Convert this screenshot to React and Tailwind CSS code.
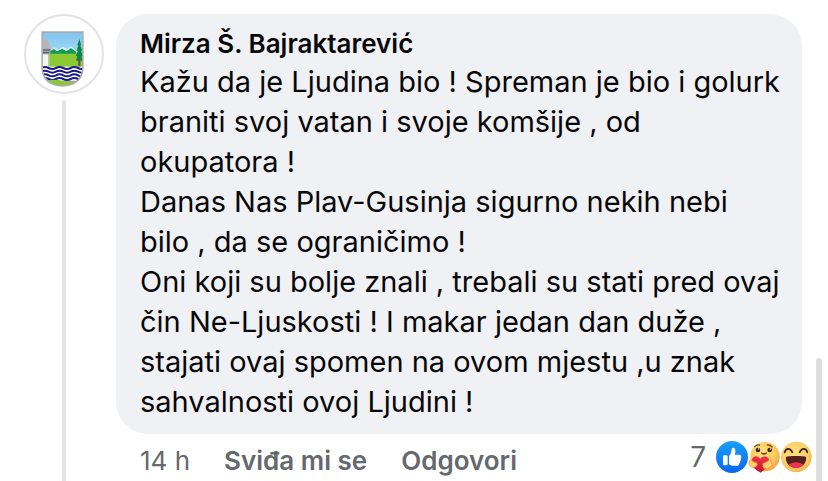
function Crest() {
  return (
    <svg viewBox="37 36 228 228" className="h-full w-full" role="img" aria-label="Grb">
      <defs>
        <clipPath id="shield">
          <path d="M87 87H206V188C206 224 182 243 147 243C112 243 87 224 87 188Z" />
        </clipPath>
        <linearGradient id="sky" x1="0" y1="0" x2="0" y2="1">
          <stop offset="0" stopColor="#7fc3ee" />
          <stop offset="1" stopColor="#a5dcf7" />
        </linearGradient>
      </defs>
      <path d="M83 82H210V190C210 228 184 248 147 248C108 248 83 228 83 190Z" fill="#a9abad" />
      <g clipPath="url(#shield)">
        <rect x="85" y="84" width="124" height="70" fill="url(#sky)" />
        <path d="M104 146L122 130L134 137L148 128L160 136L172 127L190 142V152H104Z" fill="#d9f3ee" />
        <path d="M104 152V145L120 135L130 142L146 134L158 142L172 132L188 144V152Z" fill="#119a55" />
        <rect x="85" y="149" width="124" height="48" fill="#8bc832" />
        <path d="M85 116L95 97L111 126V137H85Z" fill="#b9b5bd" />
        <rect x="85" y="134" width="25" height="18" fill="#a39faa" />
        <path d="M87 138H110M87 146H106" stroke="#55535e" strokeWidth="3" />
        <rect x="85" y="151" width="19" height="42" fill="#f4f5f5" />
        <rect x="104" y="151" width="4" height="42" fill="#b7c9aa" />
        <path d="M197 105L203 124H200L206 140H202L209 156H203L208 170H187L191 156H186L193 140H189L194 124H191Z" fill="#08864c" />
        <rect x="194" y="168" width="6" height="20" fill="#62513b" />
        <rect x="85" y="188" width="124" height="42" fill="#fff" />
        <g fill="none" stroke="#171a86" strokeWidth="6">
          <path d="M83 192q11-6 22 0t22 0t22 0t22 0t22 0t22 0" />
          <path d="M83 203q11-6 22 0t22 0t22 0t22 0t22 0t22 0" />
          <path d="M83 214q11-6 22 0t22 0t22 0t22 0t22 0t22 0" />
          <path d="M83 225q11-6 22 0t22 0t22 0t22 0t22 0t22 0" />
        </g>
        <path d="M85 230q31-6 62 0t62 0V250H85Z" fill="#8bc832" />
      </g>
    </svg>
  );
}

function LikeIcon() {
  return (
    <svg viewBox="0 0 96 96" className="size-8" role="img" aria-label="Sviđa mi se">
      <defs>
        <linearGradient id="like" x1="0" y1="0" x2="0" y2="1">
          <stop offset="0" stopColor="#18a0fb" />
          <stop offset="1" stopColor="#0866ef" />
        </linearGradient>
      </defs>
      <circle cx="48" cy="48" r="48" fill="url(#like)" />
      <rect x="21" y="43" width="14" height="30" rx="4" fill="#fff" />
      <path d="M39 45C44 41 46 34 47 25C47 18 57 18 58 27C59 33 57 38 56 41H70C76 41 78 48 74 51C77 55 75 59 72 60C74 64 72 67 69 68C70 72 67 74 62 74H50C45 74 42 72 39 70Z" fill="#fff" />
    </svg>
  );
}

function CareIcon() {
  return (
    <svg viewBox="0 0 96 96" className="size-8" role="img" aria-label="Brižno">
      <defs>
        <radialGradient id="care" cx="0.4" cy="0.35" r="0.7">
          <stop offset="0" stopColor="#ffe27a" />
          <stop offset="0.65" stopColor="#fcc95b" />
          <stop offset="1" stopColor="#f0a04a" />
        </radialGradient>
        <linearGradient id="heart" x1="0" y1="0" x2="0" y2="1">
          <stop offset="0" stopColor="#f4304b" />
          <stop offset="1" stopColor="#c9132e" />
        </linearGradient>
      </defs>
      <circle cx="51" cy="47" r="44" fill="url(#care)" />
      <path d="M20 17q6-7 14-5M58 12q8-1 14 6" fill="none" stroke="#8a4b1c" strokeWidth="4" strokeLinecap="round" />
      <ellipse cx="30" cy="27" rx="7" ry="7" fill="#3a2417" />
      <ellipse cx="65" cy="27" rx="7" ry="7" fill="#3a2417" />
      <circle cx="32" cy="24" r="2" fill="#fff" />
      <circle cx="67" cy="24" r="2" fill="#fff" />
      <path d="M41 36q7 6 14 0" fill="none" stroke="#6b3516" strokeWidth="4" strokeLinecap="round" />
      <path d="M38 95C20 85 8 74 11 58C14 43 30 42 37 54C45 41 64 45 64 60C64 75 51 85 38 95Z" fill="url(#heart)" />
      <path d="M4 60C8 54 13 59 18 64C26 63 31 69 26 74C22 80 10 80 6 74C2 70 2 64 4 60Z" fill="#ffd069" stroke="#e98a3b" strokeWidth="2" />
      <path d="M68 57C61 57 57 63 51 65C44 66 42 71 46 74C42 79 47 83 52 82C61 84 70 80 73 72Z" fill="#ffd069" stroke="#e98a3b" strokeWidth="2" />
    </svg>
  );
}

function HahaIcon() {
  return (
    <svg viewBox="0 0 96 96" className="size-8" role="img" aria-label="Haha">
      <defs>
        <radialGradient id="haha" cx="0.45" cy="0.4" r="0.65">
          <stop offset="0" stopColor="#ffe080" />
          <stop offset="0.65" stopColor="#fdcf64" />
          <stop offset="1" stopColor="#f3ad51" />
        </radialGradient>
        <clipPath id="mouth">
          <path d="M17 49C17 44 79 44 79 49C79 67 67 81 48 81C29 81 17 67 17 49Z" />
        </clipPath>
      </defs>
      <circle cx="49" cy="48" r="46" fill="url(#haha)" />
      <g fill="none" stroke="#38251c" strokeWidth="5" strokeLinecap="round" strokeLinejoin="round">
        <path d="M14 34C18 20 31 20 37 34" />
        <path d="M59 34C65 20 78 20 82 34" />
      </g>
      <g clipPath="url(#mouth)">
        <rect x="12" y="42" width="72" height="44" fill="#54211f" />
        <ellipse cx="48" cy="80" rx="27" ry="16" fill="#ec3450" />
      </g>
    </svg>
  );
}

const paragraphs = [
  "Kažu da je Ljudina bio ! Spreman je bio i golurk braniti svoj vatan i svoje komšije , od okupatora !",
  "Danas Nas Plav-Gusinja sigurno nekih nebi bilo , da se ograničimo !",
  "Oni koji su bolje znali , trebali su stati pred ovaj čin Ne-Ljuskosti ! I makar jedan dan duže , stajati ovaj spomen na ovom mjestu ,u znak sahvalnosti ovoj Ljudini !",
];

export default function App() {
  return (
    <main className="relative flex min-h-screen gap-3 overflow-hidden bg-white pt-[14px] pl-6 font-['Inter','Liberation_Sans',sans-serif]">
      <div className="flex w-20 shrink-0 flex-col items-center gap-[6px]">
        <div className="size-20 overflow-hidden rounded-full border-2 border-[#e2e3e5] bg-white">
          <Crest />
        </div>
        <div className="w-1 flex-1 rounded-t-full bg-[#e2e3e6]" />
      </div>

      <article className="min-w-0 flex-1">
        <div className="mr-[26px] rounded-[32px] bg-[#f0f1f5] pt-[14px] pr-5 pb-3 pl-6 text-[#080809]">
          <h2 className="mb-[2px] text-[26px] leading-8 font-semibold">Mirza Š. Bajraktarević</h2>
          {paragraphs.map((text) => (
            <p key={text} className="text-[29px] leading-10">{text}</p>
          ))}
        </div>
        <footer className="flex items-start pt-[7px] pr-4 pl-6 text-[26px] leading-10 text-[#65686c]">
          <div className="flex gap-[34px]">
            <time>14 h</time>
            <button type="button" className="font-semibold">Sviđa mi se</button>
            <button type="button" className="font-semibold">Odgovori</button>
          </div>
          <button type="button" className="ml-auto flex items-center" aria-label="7 reakcija">
            <span className="mr-[10px] text-[28px] leading-8">7</span>
            <LikeIcon />
            <CareIcon />
            <HahaIcon />
          </button>
        </footer>
      </article>

      <div className="absolute right-[6px] bottom-0 h-[123px] w-[6px] rounded-t-full bg-[#dedede]" />
    </main>
  );
}
